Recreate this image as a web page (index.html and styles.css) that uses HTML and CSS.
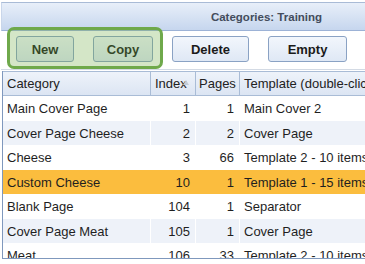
FILE: index.html
```html
<!DOCTYPE html>
<html>
<head>
<meta charset="utf-8">
<link rel="stylesheet" href="styles.css">
</head>
<body>
<div class="panel">
  <div class="titlebar">Categories: Training</div>
  <div class="toolbar">
    <button class="btn w-new">New</button>
    <button class="btn w-copy">Copy</button>
    <button class="btn w-delete">Delete</button>
    <button class="btn w-empty">Empty</button>
    <div class="highlight"></div>
  </div>
  <div class="grid">
    <div class="row head">
      <div class="cell">Category</div>
      <div class="cell sort">Index<span class="arrow"></span></div>
      <div class="cell num-h">Pages</div>
      <div class="cell">Template (double-click to change)</div>
    </div>
    <div class="row">
      <div class="cell">Main Cover Page</div>
      <div class="cell num">1</div>
      <div class="cell num">1</div>
      <div class="cell">Main Cover 2</div>
    </div>
    <div class="row alt">
      <div class="cell">Cover Page Cheese</div>
      <div class="cell num">2</div>
      <div class="cell num">2</div>
      <div class="cell">Cover Page</div>
    </div>
    <div class="row">
      <div class="cell">Cheese</div>
      <div class="cell num">3</div>
      <div class="cell num">66</div>
      <div class="cell">Template 2 - 10 items</div>
    </div>
    <div class="row sel">
      <div class="cell">Custom Cheese</div>
      <div class="cell num">10</div>
      <div class="cell num">1</div>
      <div class="cell">Template 1 - 15 items</div>
    </div>
    <div class="row">
      <div class="cell">Blank Page</div>
      <div class="cell num">104</div>
      <div class="cell num">1</div>
      <div class="cell">Separator</div>
    </div>
    <div class="row alt">
      <div class="cell">Cover Page Meat</div>
      <div class="cell num">105</div>
      <div class="cell num">1</div>
      <div class="cell">Cover Page</div>
    </div>
    <div class="row">
      <div class="cell">Meat</div>
      <div class="cell num">106</div>
      <div class="cell num">33</div>
      <div class="cell">Template 2 - 10 items</div>
    </div>
  </div>
</div>
</body>
</html>
```
FILE: styles.css
```css
html, body {
  margin: 0;
  padding: 0;
  background: #ffffff;
  overflow: hidden;
}
body {
  font-family: "Liberation Sans", Arial, sans-serif;
  color: #1f1f1f;
}
.panel {
  margin-top: 2px;
  margin-left: 1px;
  width: 530px;
}
.titlebar {
  height: 27px;
  border-top: 1px solid #a9bbd6;
  border-bottom: 1px solid #9cb2d6;
  border-left: 1px solid #c9d6ea;
  background: linear-gradient(#e8eff9, #c6d6ee);
  font-weight: bold;
  font-size: 11.5px;
  color: #434c5c;
  display: flex;
  align-items: center;
  justify-content: center;
}
.toolbar {
  position: relative;
  display: flex;
  gap: 19px;
  padding: 5px 0 7px 15px;
  border-bottom: 1px solid #d3dae4;
}
.btn {
  height: 26px;
  box-sizing: border-box;
  border: 1px solid #8aa2c4;
  border-radius: 3px;
  background: linear-gradient(#f2f6fc, #dfe8f5);
  font-family: "Liberation Sans", Arial, sans-serif;
  font-weight: bold;
  font-size: 13px;
  color: #1a1a1a;
  padding: 0;
}
.w-new { width: 58px; }
.w-copy { width: 60px; }
.w-delete { width: 77px; }
.w-empty { width: 79px; }
.highlight {
  position: absolute;
  left: 6px;
  top: -4px;
  width: 150px;
  height: 36px;
  border: 3px solid #6fa94b;
  border-radius: 7px;
  background: rgba(112, 173, 71, 0.3);
}
.grid {
  margin-top: 1px;
  margin-left: 1px;
  height: 187px;
  overflow: hidden;
  border-left: 1px solid #7f98bd;
  border-bottom: 1px solid #7f98bd;
}
.row {
  display: grid;
  grid-template-columns: 148px 45px 44px 300px;
  height: 24.5px;
  font-size: 13px;
  line-height: 25px;
  background: #ffffff;
}
.row.alt { background: #eef2f9; }
.row.sel { background: #fbbd3e; }
.row.sel .cell { border-right-color: #fbbd3e; }
.row.head {
  height: 25px;
  line-height: 24px;
  box-sizing: border-box;
  border-top: 1px solid #a9bcd6;
  border-bottom: 1px solid #a9bcd6;
  background: linear-gradient(#eef3fa, #dce5f3);
  color: #222;
}
.cell {
  border-right: 1px solid #ffffff;
  padding: 0 4px;
  white-space: nowrap;
  overflow: hidden;
}
.head .cell { border-right-color: #a9bcd6; }
.num { text-align: right; padding-right: 5px; }
.num-h { padding-left: 3px; }
.sort { position: relative; padding-left: 4px; }
.arrow {
  position: absolute;
  right: 6px;
  top: 8px;
  width: 0;
  height: 0;
  border-left: 3px solid transparent;
  border-right: 3px solid transparent;
  border-bottom: 5px solid #c3ccd8;
}
```
